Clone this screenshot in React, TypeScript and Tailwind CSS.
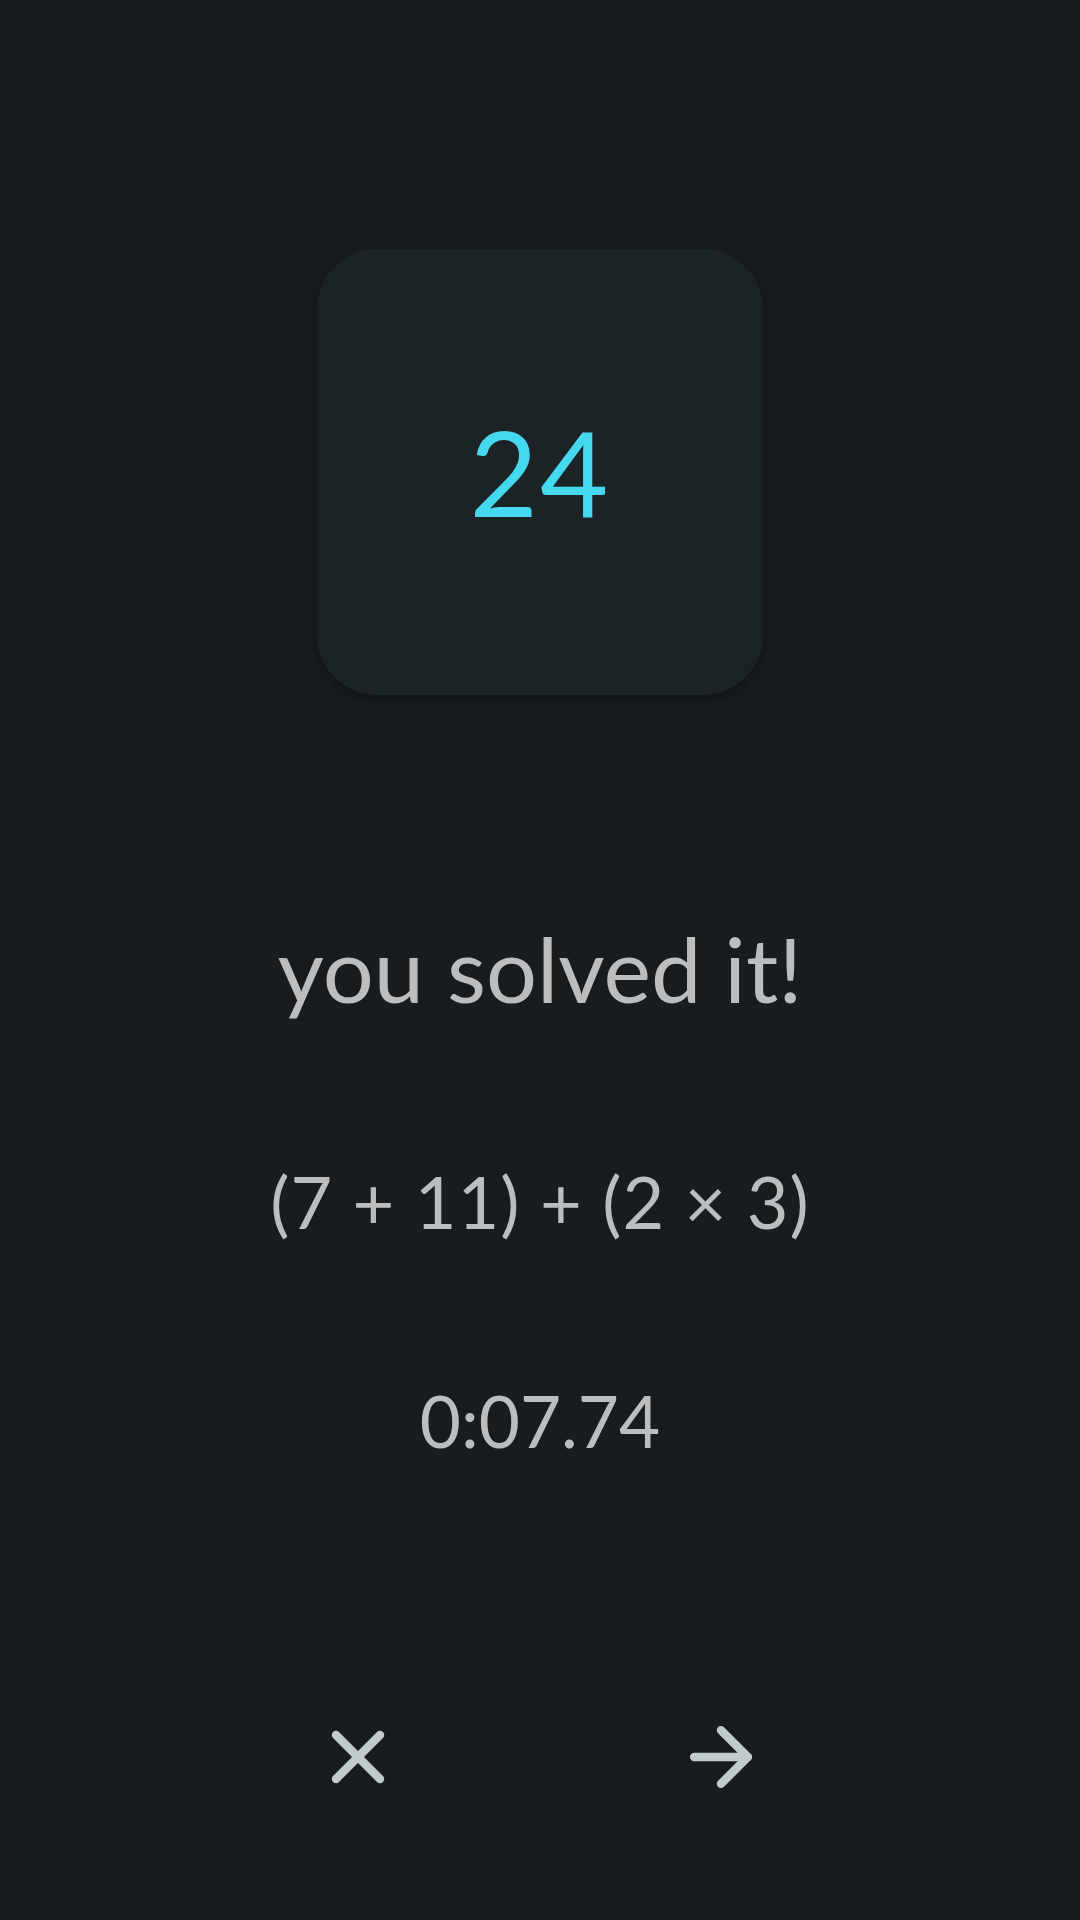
import { X, ArrowRight } from 'lucide-react'

const font = { fontFamily: 'Lato, "Noto Sans", sans-serif' }

export default function App() {
  return (
    <div
      className="flex h-[1920px] w-full flex-col items-center bg-[#191c1e]"
      style={font}
    >
      <div className="mt-[249px] flex h-[446px] w-[446px] items-center justify-center rounded-[60px] bg-[#1c2326] shadow-[0_4px_10px_rgba(0,0,0,0.3)]">
        <span className="text-[118px] font-normal leading-none tracking-[2px] text-[#45d9f0]">24</span>
      </div>

      <p className="mt-[228px] text-[90px] font-normal leading-none text-[#bbbdbf]">
        you solved it!
      </p>

      <p className="mt-[152px] text-[72px] font-normal leading-none tracking-[1px] text-[#bbbdbf]">
        (7 + 11) + (2 × 3)
      </p>

      <p className="mt-[148px] text-[71px] font-normal leading-none text-[#bbbdbf]">
        0:07.74
      </p>

      <div className="mt-[255px] flex items-center justify-center gap-[273px]">
        <button className="text-[#c2cacd]">
          <X size={88} strokeWidth={2.3} />
        </button>
        <button className="text-[#c2cacd]">
          <ArrowRight size={92} strokeWidth={2.2} />
        </button>
      </div>
    </div>
  )
}
